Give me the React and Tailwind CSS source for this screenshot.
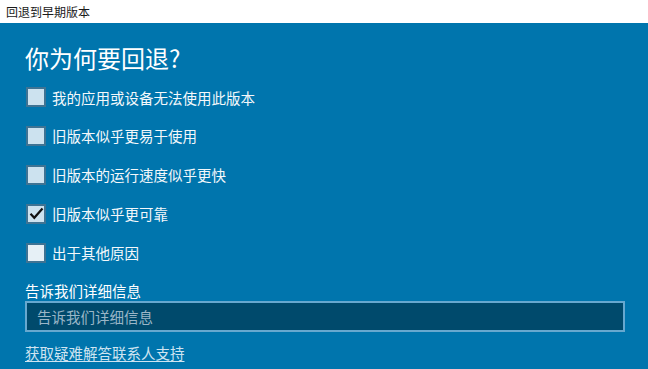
import React, { useState } from 'react';

const FONT = "font-['Microsoft_YaHei','Noto_Sans_CJK_SC',sans-serif]";

const reasons = [
    { id: 1, label: '我的应用或设备无法使用此版本', checked: false },
    { id: 2, label: '旧版本似乎更易于使用', checked: false },
    { id: 3, label: '旧版本的运行速度似乎更快', checked: false },
    { id: 4, label: '旧版本似乎更可靠', checked: true },
    { id: 5, label: '出于其他原因', checked: false, hover: true },
];

function Checkbox({ checked, hover }) {
    return (
        <span
            className={`box-border flex h-[20px] w-[20px] shrink-0 items-center justify-center border-2 border-[#3f7393] ${
                hover ? 'bg-[#e6f0f6]' : 'bg-[#cce2ef]'
            }`}
        >
            {checked && (
                <svg width="15" height="13" viewBox="0 0 15 13" fill="none">
                    <path d="M1.5 6.8 L5.3 10.8 L13.5 1.5" stroke="#111" strokeWidth="2.2" />
                </svg>
            )}
        </span>
    );
}

export default function App() {
    const [items, setItems] = useState(reasons);

    const toggle = (id) => {
        setItems(prev => prev.map(r => (r.id === id ? { ...r, checked: !r.checked } : r)));
    };

    return (
        <div className={`flex h-[369px] w-[648px] flex-col overflow-hidden ${FONT}`}>
            {/* title bar */}
            <div className="flex h-[23px] items-center bg-white pl-[6px] text-[12px] text-[#1a1a1a]">
                回退到早期版本
            </div>

            <div className="flex flex-1 flex-col bg-[#0075ad] pl-[25px] pr-[24px] text-white">
                <h1 className="mt-[19px] text-[24px] leading-[32px] font-normal">你为何要回退?</h1>

                <div className="mt-[4px] flex flex-col">
                    {items.map(r => (
                        <label
                            key={r.id}
                            onClick={() => toggle(r.id)}
                            className="flex h-[38.8px] cursor-pointer items-center gap-[6px] pl-[1px] text-[14.5px]"
                        >
                            <Checkbox checked={r.checked} hover={r.hover} />
                            <span className="text-[#f4f8fb]">{r.label}</span>
                        </label>
                    ))}
                </div>

                <div className="mt-[10px] text-[14.5px] leading-[18px]">告诉我们详细信息</div>
                <input
                    type="text"
                    placeholder="告诉我们详细信息"
                    className="mt-[1px] h-[31px] w-[600px] border-2 border-[#67a8cf] bg-[#004a6c] px-[10px] text-[14.5px] text-white outline-none placeholder:text-[#9ab6c7]"
                />

                <a href="#" className="mt-[12px] w-fit text-[14.5px] leading-[18px] text-[#cfe4f1] underline underline-offset-2">
                    获取疑难解答联系人支持
                </a>
            </div>
        </div>
    );
}
